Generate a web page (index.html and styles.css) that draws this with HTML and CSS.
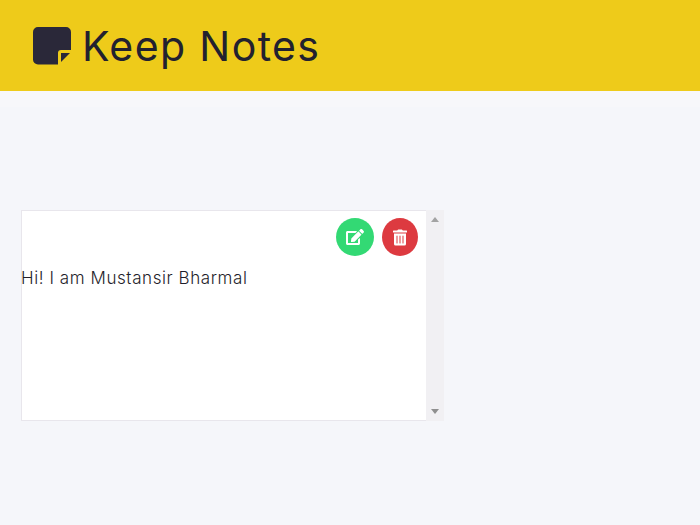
FILE: index.html
```html
<!DOCTYPE html>
<html lang="en">
<head>
<meta charset="utf-8">
<title>Keep Notes</title>
<link rel="stylesheet" href="styles.css">
</head>
<body>
<header class="header">
  <svg class="logo" viewBox="0 0 38 38" aria-hidden="true">
    <path class="logo-body" d="M5 0H33a5 5 0 0 1 5 5V23H28a3 3 0 0 0-3 3V37.500H5a5 5 0 0 1-5-5V5a5 5 0 0 1 5-5z"/>
    <path class="logo-body" d="M28 26H37L28 35z"/>
  </svg>
  <h1 class="title">Keep Notes</h1>
</header>
<div class="band"></div>
<main class="main">
  <section class="note">
    <div class="note-body">
      <div class="actions">
        <button class="action action-edit" aria-label="Edit">
          <svg class="icon-edit" viewBox="0 0 576 512"><path d="M402.600 83.200l90.200 90.200c3.800 3.800 3.800 10 0 13.800L274.400 405.600l-92.800 10.300c-12.400 1.400-22.900-9.100-21.500-21.500l10.300-92.800L388.800 83.200c3.800-3.800 10-3.800 13.800 0zm162-22.900l-48.800-48.800c-15.200-15.200-39.900-15.200-55.200 0l-35.400 35.400c-3.800 3.800-3.800 10 0 13.800l90.200 90.200c3.800 3.800 10 3.800 13.800 0l35.400-35.400c15.200-15.300 15.200-40 0-55.200zM384 346.200V448H64V128h229.800c3.200 0 6.200-1.300 8.500-3.500l40-40c7.600-7.600 2.200-20.500-8.500-20.500H48C21.500 64 0 85.500 0 112v352c0 26.500 21.500 48 48 48h352c26.500 0 48-21.500 48-48V306.200c0-10.700-12.900-16-20.500-8.500l-40 40c-2.200 2.300-3.500 5.300-3.500 8.500z"/></svg>
        </button>
        <button class="action action-delete" aria-label="Delete">
          <svg class="icon-trash" viewBox="0 0 448 512"><path d="M32 464a48 48 0 0 0 48 48h288a48 48 0 0 0 48-48V128H32zm272-256a16 16 0 0 1 32 0v224a16 16 0 0 1-32 0zm-96 0a16 16 0 0 1 32 0v224a16 16 0 0 1-32 0zm-96 0a16 16 0 0 1 32 0v224a16 16 0 0 1-32 0zM432 32H312l-9.400-18.700A24 24 0 0 0 281.100 0H166.800a23.720 23.720 0 0 0-21.400 13.300L136 32H16A16 16 0 0 0 0 48v32a16 16 0 0 0 16 16h416a16 16 0 0 0 16-16V48a16 16 0 0 0-16-16z"/></svg>
        </button>
      </div>
      <p class="note-text">Hi! I am Mustansir Bharmal</p>
    </div>
    <div class="scrollbar">
      <span class="arrow arrow-up"></span>
      <span class="arrow arrow-down"></span>
    </div>
  </section>
</main>
</body>
</html>
```
FILE: styles.css
```css
* { box-sizing: border-box; }
html, body { margin: 0; height: 100%; }
body {
  background: #f5f6fa;
  font-family: "Inter", "Lato", sans-serif;
  color: #25233a;
  overflow: hidden;
}
.header {
  height: 91px;
  background: #eecb1a;
  display: flex;
  align-items: center;
  gap: 11px;
  padding-left: 33px;
}
.logo { width: 38px; height: 38px; flex: none; }
.logo-body { fill: #2a2839; }
.title {
  margin: 2px 0 0;
  font-size: 41px;
  font-weight: 400;
  line-height: 1;
  letter-spacing: 1.4px;
  color: #22212f;
}
.band { height: 16px; background: #f7f7fa; }
.main { padding: 103px 0 0 21px; }
.note { display: flex; width: 423px; height: 211px; }
.note-body {
  width: 405px;
  background: #fff;
  border: 1px solid #e8e6ec;
  border-right: 0;
}
.actions {
  display: flex;
  justify-content: flex-end;
  gap: 8px;
  padding: 7px 8px 0 0;
}
.action {
  width: 36px;
  height: 38px;
  border: 0;
  border-radius: 50%;
  padding: 0;
  display: flex;
  align-items: center;
  justify-content: center;
}
.action svg { fill: #fff; display: block; }
.action-edit { background: #33d974; width: 38px; }
.action-delete { background: #dd3a40; }
.icon-edit { width: 18px; height: 16px; }
.icon-trash { width: 14px; height: 17px; }
.note-text {
  margin: 10px 0 0 -1px;
  font-size: 17px;
  font-weight: 300;
  line-height: 24px;
  color: #1f1e2b;
  letter-spacing: 0.58px;
}
.scrollbar {
  width: 18px;
  background: #f1f0f3;
  display: flex;
  flex-direction: column;
  justify-content: space-between;
  align-items: center;
  padding: 7px 0;
}
.arrow { width: 0; height: 0; border-left: 4px solid transparent; border-right: 4px solid transparent; }
.arrow-up { border-bottom: 5px solid #a3a3a3; }
.arrow-down { border-top: 5px solid #8f8f8f; }
```
